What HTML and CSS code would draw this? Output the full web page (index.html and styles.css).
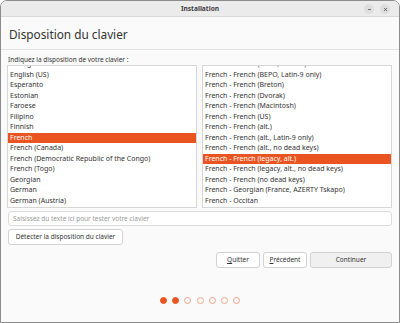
FILE: index.html
```html
<!DOCTYPE html>
<html lang="fr">
<head>
<meta charset="utf-8">
<title>Installation</title>
<link rel="stylesheet" href="styles.css">
</head>
<body>
<div class="window">
  <div class="titlebar">
    <span class="title">Installation</span>
    <div class="controls">
      <span class="ctl"><svg width="9" height="9" viewBox="0 0 9 9"><line x1="3" y1="4.5" x2="6" y2="4.5" stroke="#555" stroke-width="0.8"/></svg></span>
      <span class="ctl"><svg width="9" height="9" viewBox="0 0 9 9"><path d="M3 3 L6 6 M6 3 L3 6" stroke="#555" stroke-width="0.8"/></svg></span>
    </div>
  </div>
  <div class="header">
    <h1>Disposition du clavier</h1>
  </div>
  <div class="content">
    <div class="label">Indiquez la disposition de votre clavier :</div>
    <div class="lists">
      <div class="list">
        <ul class="items">
          <li>Dzongkha</li>
          <li>English (US)</li>
          <li>Esperanto</li>
          <li>Estonian</li>
          <li>Faroese</li>
          <li>Filipino</li>
          <li>Finnish</li>
          <li class="sel">French</li>
          <li>French (Canada)</li>
          <li>French (Democratic Republic of the Congo)</li>
          <li>French (Togo)</li>
          <li>Georgian</li>
          <li>German</li>
          <li>German (Austria)</li>
          <li>Greek</li>
        </ul>
      </div>
      <div class="list">
        <ul class="items">
          <li>French - French (BEPO, AFNOR)</li>
          <li>French - French (BEPO, Latin-9 only)</li>
          <li>French - French (Breton)</li>
          <li>French - French (Dvorak)</li>
          <li>French - French (Macintosh)</li>
          <li>French - French (US)</li>
          <li>French - French (alt.)</li>
          <li>French - French (alt., Latin-9 only)</li>
          <li>French - French (alt., no dead keys)</li>
          <li class="sel">French - French (legacy, alt.)</li>
          <li>French - French (legacy, alt., no dead keys)</li>
          <li>French - French (no dead keys)</li>
          <li>French - Georgian (France, AZERTY Tskapo)</li>
          <li>French - Occitan</li>
          <li>French - Other</li>
        </ul>
      </div>
    </div>
    <input class="entry" type="text" placeholder="Saisissez du texte ici pour tester votre clavier">
    <div class="row-detect"><button class="btn detect">Détecter la disposition du clavier</button></div>
    <div class="actions">
      <button class="btn act"><u>Q</u>uitter</button>
      <button class="btn act"><u>P</u>récédent</button>
      <button class="btn act primary">Continuer</button>
    </div>
  </div>
  <div class="dots">
    <span class="dot on"></span><span class="dot on"></span><span class="dot"></span><span class="dot"></span><span class="dot"></span><span class="dot"></span><span class="dot"></span>
  </div>
</div>
</body>
</html>
```

FILE: styles.css
```css
* { box-sizing: border-box; }
html, body { margin: 0; padding: 0; }
body {
  width: 400px;
  height: 323px;
  overflow: hidden;
  background: #fafafa;
  font-family: "Noto Sans", "DejaVu Sans", sans-serif;
  color: #333;
}
.window {
  width: 400px;
  height: 323px;
  border: 1px solid #8c8c8c;
  border-radius: 7px 7px 0 0;
  background: #fafafa;
  overflow: hidden;
  display: flex;
  flex-direction: column;
}
.titlebar {
  height: 16px;
  flex: none;
  background: #ebebeb;
  border-bottom: 1px solid #dadada;
  display: flex;
  align-items: center;
  justify-content: center;
  position: relative;
}
.title {
  font-size: 6.6px;
  font-weight: bold;
  color: #3d3d3d;
}
.controls {
  position: absolute;
  right: 9px;
  top: 3px;
  display: flex;
  gap: 6px;
}
.ctl {
  width: 10px;
  height: 10px;
  border-radius: 50%;
  background: #dedede;
  display: flex;
  align-items: center;
  justify-content: center;
}
.header {
  height: 33px;
  flex: none;
  border-bottom: 1px solid #e2e2e2;
  padding: 9px 8px 0;
}
h1 {
  margin: 0;
  font-size: 11.8px;
  font-weight: normal;
  color: #333;
  line-height: 17px;
}
.content {
  padding: 5px 6px 0 6px;
}
.label {
  font-size: 6.5px;
  line-height: 10px;
  color: #333;
  margin-left: 1px;
}
.lists {
  display: grid;
  grid-template-columns: 190px 190px;
  gap: 5px;
}
.list {
  height: 143px;
  background: #fff;
  border: 1px solid #d6d6d6;
  overflow: hidden;
}
.items {
  list-style: none;
  margin: -6.7px 0 0 0;
  padding: 0;
}
.items li {
  height: 10.5px;
  line-height: 10.5px;
  font-size: 7px;
  padding-left: 2px;
  color: #333;
  white-space: nowrap;
}
.items li.sel {
  background: #e95420;
  color: #fff;
}
.entry {
  display: block;
  width: 384px;
  height: 15px;
  margin: 3px 0 0 1px;
  border: 1px solid #dcdcdc;
  border-radius: 3px;
  background: #fff;
  font-family: inherit;
  font-size: 6.5px;
  padding: 0 4px;
  color: #333;
  outline: none;
}
.entry::placeholder { color: #9a9a9a; }
.row-detect {
  display: flex;
  margin: 3px 0 0 1px;
}
.btn {
  font-family: inherit;
  font-size: 6.5px;
  color: #333;
  background: #fff;
  border: 1px solid #d2d2d2;
  border-radius: 3px;
  height: 16px;
  padding: 0 7px;
  line-height: 14px;
}
.detect { width: 115px; padding: 0; }
.actions {
  display: flex;
  justify-content: flex-end;
  gap: 3px;
  margin-top: 7px;
  margin-right: 1px;
}
.act { height: 16px; padding: 0; }
.act:nth-child(1) { width: 44px; }
.act:nth-child(2) { width: 44px; }
.primary { width: 82px; background: #f0f0f0; }
.dots {
  margin-top: auto;
  margin-bottom: 18px;
  display: flex;
  justify-content: center;
  gap: 5.3px;
}
.dot {
  width: 7px;
  height: 7px;
  border-radius: 50%;
  border: 1px solid #f2a486;
}
.dot.on {
  background: #e95420;
  border-color: #e95420;
}
```
